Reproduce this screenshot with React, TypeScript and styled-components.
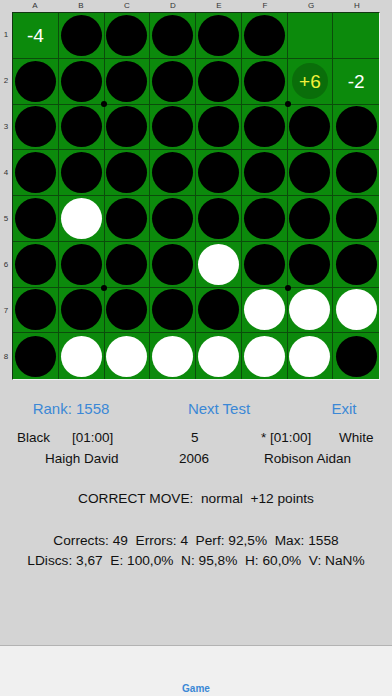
import React from "react";
import styled, { createGlobalStyle } from "styled-components";

const Global = createGlobalStyle`
  html, body { margin: 0; padding: 0; }
  body { background: #d4d4d4; font-family: "Helvetica Neue", "Liberation Sans", Arial, sans-serif; }
`;

const Screen = styled.div`
  width: 392px;
  height: 696px;
  display: flex;
  flex-direction: column;
  background: #d4d4d4;
  overflow: hidden;
`;

const BoardArea = styled.div`
  display: grid;
  grid-template-columns: 12px 368px;
  grid-template-rows: 12px 368px;
`;

const ColLabels = styled.div`
  grid-column: 2;
  display: grid;
  grid-template-columns: repeat(8, 46px);
  align-items: center;
`;

const RowLabels = styled.div`
  grid-row: 2;
  grid-column: 1;
  display: grid;
  grid-template-rows: repeat(8, 46px);
  justify-items: center;
  align-items: center;
`;

const Label = styled.span`
  font-family: "Liberation Sans", Arial, sans-serif;
  font-size: 8px;
  color: #333;
  text-align: center;
  line-height: 1;
`;

const Board = styled.div`
  grid-row: 2;
  grid-column: 2;
  position: relative;
  box-sizing: border-box;
  width: 368px;
  height: 368px;
  display: grid;
  grid-template-columns: repeat(8, 1fr);
  grid-template-rows: repeat(8, 1fr);
  background: #0c8a0c;
  border-left: 1px solid #123612;
  border-top: 1px solid #123612;
  border-right: 1px solid #f4f4f4;
  border-bottom: 1px solid #f4f4f4;
`;

const Cell = styled.div<{ $r: number; $c: number }>`
  display: flex;
  align-items: center;
  justify-content: center;
  box-sizing: border-box;
  border-right: ${(p) => (p.$c < 7 ? "1px solid #0b4d0b" : "none")};
  border-bottom: ${(p) => (p.$r < 7 ? "1px solid #0b4d0b" : "none")};
`;

const Disc = styled.div<{ $white?: boolean }>`
  width: 41px;
  height: 41px;
  border-radius: 50%;
  background: ${(p) => (p.$white ? "#ffffff" : "#000000")};
`;

const Hint = styled.div`
  width: 36px;
  height: 36px;
  border-radius: 50%;
  background: #0a6e0a;
  display: flex;
  align-items: center;
  justify-content: center;
`;

const Score = styled.span<{ $yellow?: boolean }>`
  font-size: 19px;
  color: ${(p) => (p.$yellow ? "#f2f23a" : "#ffffff")};
  line-height: 1;
`;

const Dot = styled.div<{ $x: number; $y: number }>`
  position: absolute;
  width: 6px;
  height: 6px;
  border-radius: 50%;
  background: #000;
  left: ${(p) => p.$x - 4}px;
  top: ${(p) => p.$y - 4}px;
`;

const Info = styled.div`
  flex: 1;
  display: flex;
  flex-direction: column;
  padding-top: 18px;
`;

const ButtonRow = styled.div`
  display: grid;
  grid-template-columns: 142px 154px 96px;
  height: 20px;
  align-items: center;
`;

const LinkButton = styled.span`
  color: #3b88d6;
  font-size: 15px;
  text-align: center;
`;

const PlayerRow = styled.div<{ $mt: number }>`
  position: relative;
  height: 20px;
  font-size: 13.5px;
  color: #111;
  margin-top: ${(p) => p.$mt}px;
`;

const Field = styled.span<{ $x: number }>`
  position: absolute;
  left: ${(p) => p.$x}px;
  top: 0;
  white-space: nowrap;
`;

const CenterLine = styled.div<{ $mt: number }>`
  text-align: center;
  font-size: 13.7px;
  color: #111;
  margin-top: ${(p) => p.$mt}px;
  white-space: pre;
  line-height: 20px;
`;

const TabBar = styled.div`
  height: 51px;
  border-top: 1px solid #b3b3b3;
  background: #f0f0f0;
  display: flex;
  align-items: flex-end;
  justify-content: center;
  box-sizing: border-box;
  padding-bottom: 2px;
`;

const TabLabel = styled.span`
  font-size: 10px;
  font-weight: 600;
  color: #3b88d6;
`;

const board: string[][] = [
  ["-4", "B", "B", "B", "B", "B", "", ""],
  ["B", "B", "B", "B", "B", "B", "+6", "-2"],
  ["B", "B", "B", "B", "B", "B", "B", "B"],
  ["B", "B", "B", "B", "B", "B", "B", "B"],
  ["B", "W", "B", "B", "B", "B", "B", "B"],
  ["B", "B", "B", "B", "W", "B", "B", "B"],
  ["B", "B", "B", "B", "B", "W", "W", "W"],
  ["B", "W", "W", "W", "W", "W", "W", "B"],
];

const cols = ["A", "B", "C", "D", "E", "F", "G", "H"];

export default function App() {
  return (
    <>
      <Global />
      <Screen>
        <BoardArea>
          <ColLabels>
            {cols.map((c) => (
              <Label key={c}>{c}</Label>
            ))}
          </ColLabels>
          <RowLabels>
            {cols.map((_, i) => (
              <Label key={i}>{i + 1}</Label>
            ))}
          </RowLabels>
          <Board>
            {board.map((row, r) =>
              row.map((v, c) => (
                <Cell key={`${r}-${c}`} $r={r} $c={c}>
                  {v === "B" && <Disc />}
                  {v === "W" && <Disc $white />}
                  {v === "+6" && (
                    <Hint>
                      <Score $yellow>+6</Score>
                    </Hint>
                  )}
                  {(v === "-4" || v === "-2") && <Score>{v}</Score>}
                </Cell>
              ))
            )}
            <Dot $x={92} $y={92} />
            <Dot $x={276} $y={92} />
            <Dot $x={92} $y={276} />
            <Dot $x={276} $y={276} />
          </Board>
        </BoardArea>
        <Info>
          <ButtonRow>
            <LinkButton>Rank: 1558</LinkButton>
            <LinkButton>Next Test</LinkButton>
            <LinkButton>Exit</LinkButton>
          </ButtonRow>
          <PlayerRow $mt={12}>
            <Field $x={17}>Black</Field>
            <Field $x={72}>[01:00]</Field>
            <Field $x={191}>5</Field>
            <Field $x={261}>* [01:00]</Field>
            <Field $x={339}>White</Field>
          </PlayerRow>
          <PlayerRow $mt={1}>
            <Field $x={45}>Haigh David</Field>
            <Field $x={179}>2006</Field>
            <Field $x={264}>Robison Aidan</Field>
          </PlayerRow>
          <CenterLine $mt={18}>CORRECT MOVE:  normal  +12 points</CenterLine>
          <CenterLine $mt={22}>Corrects: 49  Errors: 4  Perf: 92,5%  Max: 1558</CenterLine>
          <CenterLine $mt={0}>LDiscs: 3,67  E: 100,0%  N: 95,8%  H: 60,0%  V: NaN%</CenterLine>
        </Info>
        <TabBar>
          <TabLabel>Game</TabLabel>
        </TabBar>
      </Screen>
    </>
  );
}
